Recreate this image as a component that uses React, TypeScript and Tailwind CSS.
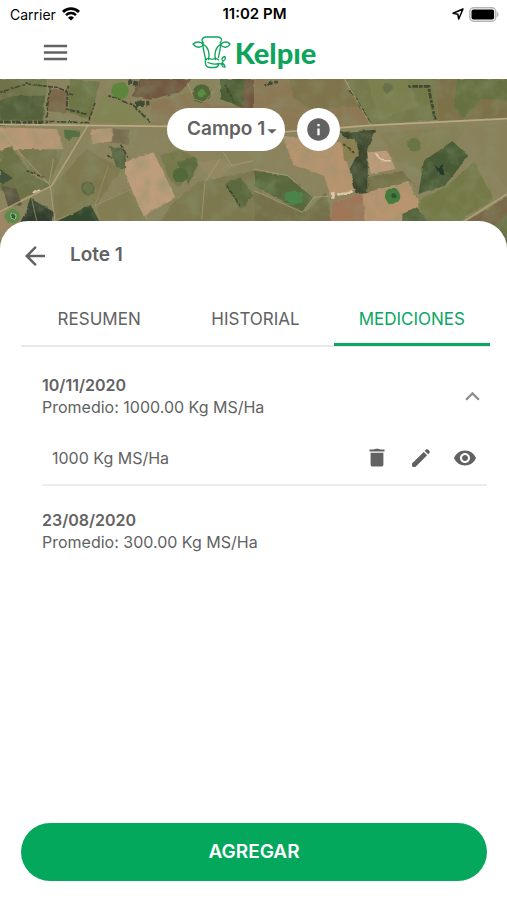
import type { FC } from "react";
import {
  MdArrowBack,
  MdArrowDropDown,
  MdExpandLess,
  MdInfo,
  MdMenu,
  MdVisibility,
} from "react-icons/md";

const StatusBar: FC = () => {
  return (
    <div className="grid grid-cols-3 items-center h-7 pl-[10px] pr-2 text-black text-[14px]">
      <div className="flex items-center gap-[6px]">
        <span>Carrier</span>
        <svg className="w-[18px] h-[14px]" viewBox="0 0 18 14" fill="none" stroke="currentColor">
          <path d="M1 4.9a11.4 11.4 0 0 1 16 0" strokeWidth="2.8" />
          <path d="M4 8.1a7.1 7.1 0 0 1 10 0" strokeWidth="2.4" />
          <path d="M9 13.6 6 10.7a4.4 4.4 0 0 1 6 0Z" fill="currentColor" stroke="none" />
        </svg>
      </div>
      <span className="text-center text-[15px] font-semibold">11:02 PM</span>
      <div className="flex items-center justify-end gap-[5px]">
        <svg className="w-3 h-3" viewBox="0 0 12 12" fill="none" stroke="currentColor">
          <path d="M11 1 1 5.3l4.8.9.9 4.8Z" strokeWidth="1.5" strokeLinejoin="round" />
        </svg>
        <svg className="w-[30px] h-[15px]" viewBox="0 0 30 15">
          <rect x="0.8" y="0.8" width="26" height="13.4" rx="4" fill="#fff" stroke="#b5b5b5" strokeWidth="1.5" />
          <rect x="2.5" y="2.5" width="22.6" height="10" rx="2" fill="#000" />
          <path d="M28 5v5c2-.6 2-4.4 0-5Z" fill="#b5b5b5" />
        </svg>
      </div>
    </div>
  );
};

const Logo: FC = () => {
  return (
    <a href="#" aria-label="Kelpie" className="flex items-center gap-1 text-[#0fa45c]">
      <svg
        className="w-[40px] h-[34px]"
        viewBox="0 0 40 34"
        fill="none"
        stroke="currentColor"
        strokeWidth="1.3"
        strokeLinecap="round"
        strokeLinejoin="round"
      >
        {/* crown and horns */}
        <path d="M12 6.500C9.500 3.500 12 1.200 15 1h11.500c3.500.2 5.500 2.500 3 5.500" />
        {/* ears */}
        <path d="M12.500 8.500C9.500 5 5 5.500 2 8c3 4 8 4.500 10.500.5ZM29.500 8.500c3-3.500 7.500-3 9.500-.5-2 4-7 4.500-9.500.5Z" />
        {/* face */}
        <path d="M12 6.500c-.5 8 2 11 2.500 17.500M29.500 6.500c.5 7-1.500 10-2 15" />
        <path d="M12.500 8.500c5 2.500 6.500 9 5 15M29.500 8.500c-5 2.500-6.500 9-5 15" />
        {/* snout */}
        <path d="M14.500 24c2.500-3 4-1.500 6.500-.5 2.500-1 4-2.500 6.500.5" />
        <path d="M14.500 24c-1 4.500 1 7.500 4 7.500h5c2.500 0 4-1.500 4.500-4-4 1-8 .5-11-1" />
        {/* sprig */}
        <path d="M28 27.500c2 1 4-.5 4-2.500-2-1.500-1-4 2-4.500.5 2-.5 4-2 4.500M31 27.500c1.500 0 2.500 1.500 3 3.500-2 .5-3.500-1-3-3.500Z" />
      </svg>
      <span className="font-[Lato,sans-serif] text-[29px] leading-8 font-black">Kelpıe</span>
    </a>
  );
};

const TrashIcon: FC = () => {
  return (
    <svg className="size-6" viewBox="0 0 24 24" fill="currentColor">
      <path d="M4.500 3.600h4.300c.8-1.200 5.600-1.200 6.400 0h4.300v2h-15Z" />
      <path d="M5.600 6.700h12.800v11.800c0 1.300-.8 2.100-2 2.100H7.600c-1.200 0-2-.8-2-2.100Z" />
    </svg>
  );
};

const PencilIcon: FC = () => {
  return (
    <svg className="size-6" viewBox="0 0 24 24" fill="currentColor">
      <path d="m3 17.600 11.700-11.700 3.400 3.400L6.400 21H4.200c-.7 0-1.200-.5-1.200-1.200Z" />
      <path d="m15.700 4.900 1.300-1.300c.6-.6 1.500-.6 2.100 0l1.300 1.300c.6.6.6 1.500 0 2.100l-1.300 1.300Z" />
    </svg>
  );
};

// Aerial view of the fields behind the lot panel
const FieldMap: FC = () => {
  return (
    <svg
      className="block w-full h-[171px] bg-[#89825b]"
      viewBox="0 0 1521 513"
      preserveAspectRatio="xMidYMin slice"
      aria-hidden="true"
    >
      <defs>
        <filter id="ground" x="0" y="0" width="100%" height="100%">
          <feTurbulence type="fractalNoise" baseFrequency="0.02" numOctaves="5" seed="7" />
          <feColorMatrix values="0 0 0 0 0.24  0 0 0 0 0.29  0 0 0 0 0.15  0 2.2 0 0 -0.9" />
        </filter>
        <filter id="rough" x="-5%" y="-5%" width="110%" height="110%">
          <feTurbulence type="fractalNoise" baseFrequency="0.04" numOctaves="2" result="n" />
          <feDisplacementMap in="SourceGraphic" in2="n" scale="10" xChannelSelector="R" yChannelSelector="G" />
          <feGaussianBlur stdDeviation="1.5" />
        </filter>
      </defs>
      <rect width="1521" height="513" fill="#8b835d" />
      <g filter="url(#rough)">
        <path d="M0 0h140l-10 125H0Z" fill="#707348" />
        <path d="m0 65 40-15h95l-8 72H0Z" fill="#53613a" />
        <path d="m150 30 55 10-5 62-60-6Z" fill="#7c6548" />
        <path d="m210 0 90 10-30 110-65-20Z" fill="#6d7545" />
        <path d="m305 50 110 40 40 42-180-2Z" fill="#828452" />
        <path d="M420 0h155l-35 40-90 22-55-10Z" fill="#71563f" />
        <path d="m450 70 120-30 65 40h130v60H455Z" fill="#8d7855" />
        <path d="M660 0h80l-15 85-65-25Z" fill="#4d5e36" />
        <path d="M735 0h30v90h-40Z" fill="#725740" />
        <path d="m0 145 170 5 20 60H60L0 225Z" fill="#b99874" />
        <path d="m275 150 60-2v36l-60 12Z" fill="#b99874" />
        <path d="m340 150 50 3-3 45-50-8Z" fill="#786c50" />
        <path d="m0 215 35-10 60 85 60 30L40 370 0 330Z" fill="#6e7246" />
        <path d="m60 210 130 5-40 95-60-30Z" fill="#7a7850" />
        <path d="m160 320 100-110 105 60-75 105-125 45Z" fill="#80794f" />
        <path d="m325 200 50 10 5 60-30-5Z" fill="#566341" />
        <path d="m375 250 85-30 65 135-95 55-55-125Z" fill="#be9d7a" />
        <path d="m290 380 95-50 55 95H300Z" fill="#837d53" />
        <path d="m480 230 60-20 55 30-55 85-30-20Z" fill="#77784c" />
        <path d="m530 250 55-15 10 20-30 60Z" fill="#5b6a3c" />
        <path d="m590 250 70-10 40 20-55 50Z" fill="#958762" />
        <path d="m525 365 70-55 190-40v180H465Z" fill="#7d7950" />
        <path d="m675 315 45-20 40 55-40 40Z" fill="#5b683e" />
        <path d="m65 430 30-70 65 38-5 32Z" fill="#303d2d" />
        <path d="m165 430 107-52 28 52Z" fill="#33482f" />
        <path d="m0 270 38 28-28 17-10-5Z" fill="#43523b" />
        <path d="m5 320 45 10 15 45-40 10Z" fill="#5b5740" />
        <path d="M0 400h60v113H0Z" fill="#a08563" />

        <g transform="translate(762 0)">
          <path d="M0 0h270l78 137-348 20Z" fill="#8d7855" />
          <path d="M110 0h155l45 80-140 15-55-45Z" fill="#7f734b" />
          <path d="M275 0h265l12 122-202 15Z" fill="#767a4b" />
          <path d="m340 0 120 2 35 80-120 40Z" fill="#7b8050" />
          <path d="M540 0h230v118l-216 8Z" fill="#7c7149" />
          <path d="m610 0 160 3v62l-90-5-50 60-30-40Z" fill="#66703f" />
          <path d="m85 170 175 20 45 145-75 15-20-60-92-35Z" fill="#b79470" />
          <path d="m255 160 110-8-25 58 3 128-38 5-18-73 28-55Z" fill="#3d462f" />
          <path d="m265 185 40-6 10 52-45 16Z" fill="#8b7e50" />
          <path d="m340 220 60-5 25 55-75 15Z" fill="#bd9b7a" />
          <path d="m375 160 260-20-40 75-90 60-80-30Z" fill="#858055" />
          <path d="m650 150 120-20v210l-81-90Z" fill="#89815a" />
          <path d="m500 360 80-40 80-70 60 110-110 70H500Z" fill="#747947" />
          <path d="m510 245 85-58 48 43-70 90-80 25Z" fill="#465a35" />
          <path d="m0 275 100 15 80 65-35 45L0 320Z" fill="#59683d" />
          <path d="m0 335 155 65 60-60 20 90H0Z" fill="#747049" />
          <path d="m235 370 225-65 35 65-5 60H230Z" fill="#b8946f" />
          <path d="m235 370 90-25 10 85H230Z" fill="#a07558" />
          <path d="m445 405 45-20 30 45h-75Z" fill="#55653c" />
          <path d="m340 295 105-20 50 60-30-30-125 35Z" fill="#76734a" />
          <path d="m630 430 140-82v165Z" fill="#79694a" />
          <path d="m770 400-60 60 60 53Z" fill="#6b7044" />
        </g>
      </g>

      <rect width="1521" height="513" filter="url(#ground)" opacity="0.45" />

      <g filter="url(#rough)">
        <circle cx="360" cy="36" r="26" fill="#5f853e" />
        <circle cx="605" cy="44" r="28" fill="#536639" />
        <circle cx="605" cy="43" r="12" fill="#559040" />
        <circle cx="540" cy="288" r="22" fill="#516a38" />
        <path d="m192 152 50 3-5 18-20 2-8 12-15-12Z" fill="#547042" />
        <circle cx="264" cy="328" r="18" fill="#6b744a" stroke="#5b6841" strokeWidth="4" />
        <circle cx="38" cy="412" r="22" fill="#5c8a4c" />
        <circle cx="40" cy="412" r="8" fill="#2f5c3c" stroke="#a9c58d" strokeWidth="3" />
        <path d="m855 343 30-10 22 8-4 30-28 8-20-16Z" fill="#4c8448" />
        <circle cx="1178" cy="352" r="23" fill="#467a3c" />
        <circle cx="1181" cy="350" r="7" fill="#2b5537" />
        <circle cx="1242" cy="197" r="20" fill="#6a7445" />
        <circle cx="1163" cy="27" r="15" fill="#69704b" />
        <path d="m1302 255 14 14 12-14 5 34-15-3Z" fill="#21382b" />
      </g>

      {/* tree lines */}
      <g fill="none" stroke="#414a32" strokeWidth="5" strokeDasharray="9 3 17 5" filter="url(#rough)">
        <path d="M0 127h130l135 4 20-60M150 20l-12 100M0 40l80-25 90 10 50 20" />
        <path d="M0 133h125" strokeWidth="9" />
        <path d="m325 50 75 28 50 52M205 20l-5 70 65 18" strokeWidth="6" />
        <path d="m405 75 45-3M385 10l35 5" strokeWidth="14" />
        <path d="M1225 22h60l20 100M790 20l40-12" strokeWidth="8" />
        <path d="m1050 30 60 100M1030 195l35 30M320 230l20 10M365 200l20 40" />
        <path d="m675 15 30 60M680 320l40 60M80 275l50 20" />
      </g>

      {/* roads and field borders */}
      <g fill="none" stroke="#b9a980">
        <path d="m0 136 500 6 350 17 262-20 409-20" strokeWidth="5" />
        <path d="M265 137 155 320 0 398M1521 345l-170 108" strokeWidth="5" opacity="0.75" />
        <path d="m0 148 65 80 85 90 15 110M95 360l15 65M160 240l-12 70M1034 0l78 138" strokeWidth="3" opacity="0.6" />
        <path d="m762 270 100 20 80 65 60-5 65-20M942 355l-35 45-145-65" strokeWidth="3" opacity="0.6" />
        <path d="m325 260-40 120 110-50 45 90M460 220l65 135-90 55" strokeWidth="2" opacity="0.5" />
        <path d="m562 10 20 50 30 10 30-35M660 240l-45 70-10 110M670 220l25 40 65-15" strokeWidth="3" opacity="0.5" />
      </g>
      <g fill="none" stroke="#dcc8a4" strokeLinecap="round" filter="url(#rough)">
        <path d="m1015 346 40-8M1000 342v14" strokeWidth="8" />
        <path d="m1128 224 12 20 30 2M100 340l18-6" strokeWidth="5" />
      </g>
    </svg>
  );
};

const Tabs: FC = () => {
  return (
    <div role="tablist" className="grid grid-cols-3 ml-[21px] mr-[17px] border-b-2 border-[#e9e9e9] text-[17px]">
      <button role="tab" aria-selected="false" className="h-[50px] -mb-px border-b-3 border-transparent">
        RESUMEN
      </button>
      <button role="tab" aria-selected="false" className="h-[50px] -mb-px border-b-3 border-transparent">
        HISTORIAL
      </button>
      <button
        role="tab"
        aria-selected="true"
        className="h-[50px] -mb-px border-b-3 border-[#0ba662] text-[#0ba662]"
      >
        MEDICIONES
      </button>
    </div>
  );
};

const App: FC = () => {
  return (
    <div className="flex flex-col min-h-screen bg-white font-[Inter,sans-serif] text-[#626262]">
      <StatusBar />
      <header className="grid grid-cols-[1fr_auto_1fr] items-center h-[51px] px-10 pb-[2px]">
        <button aria-label="Menu" className="justify-self-start">
          <MdMenu className="size-[31px]" />
        </button>
        <Logo />
      </header>

      <div className="relative">
        <FieldMap />
        <div className="absolute top-[29px] inset-x-0 flex justify-center gap-3">
          <div className="relative">
            <select
              aria-label="Campo"
              className="h-[43px] w-[118px] appearance-none rounded-full bg-white pl-5 text-[19px] font-semibold outline-none"
            >
              <option>Campo 1</option>
            </select>
            <MdArrowDropDown className="pointer-events-none absolute right-[2px] top-3 size-[22px]" />
          </div>
          <button aria-label="Información" className="flex items-center justify-center size-[43px] rounded-full bg-white">
            <MdInfo className="size-[27px]" />
          </button>
        </div>
      </div>

      <main className="relative flex flex-col grow -mt-[29px] rounded-t-[28px] bg-white">
        <div className="flex items-center gap-5 h-[75px] px-5 pb-[6px]">
          <button aria-label="Volver">
            <MdArrowBack className="size-[30px]" />
          </button>
          <h1 className="text-[19px] font-semibold">Lote 1</h1>
        </div>

        <Tabs />

        <div className="flex flex-col pl-[42px] pr-5 pt-[27px] text-[16px] leading-[22px]">
          <section className="border-b-2 border-[#ececec]">
            <div className="flex items-center justify-between">
              <div>
                <h2 className="font-semibold">10/11/2020</h2>
                <p>Promedio: 1000.00 Kg MS/Ha</p>
              </div>
              <button aria-label="Contraer" className="text-[#8c8c8c]">
                <MdExpandLess className="size-[29px]" />
              </button>
            </div>
            <div className="flex items-center justify-between h-[66px] px-[10px] pt-[14px]">
              <span>1000 Kg MS/Ha</span>
              <div className="flex gap-5">
                <button aria-label="Eliminar">
                  <TrashIcon />
                </button>
                <button aria-label="Editar">
                  <PencilIcon />
                </button>
                <button aria-label="Ver">
                  <MdVisibility className="size-6" />
                </button>
              </div>
            </div>
          </section>
          <section className="pt-[23px]">
            <h2 className="font-semibold">23/08/2020</h2>
            <p>Promedio: 300.00 Kg MS/Ha</p>
          </section>
        </div>

        <div className="mt-auto pl-[21px] pr-5 pb-[19px]">
          <button className="w-full h-[58px] rounded-full bg-[#03a85c] text-[19px] font-semibold text-white">
            AGREGAR
          </button>
        </div>
      </main>
    </div>
  );
};

export default App;
